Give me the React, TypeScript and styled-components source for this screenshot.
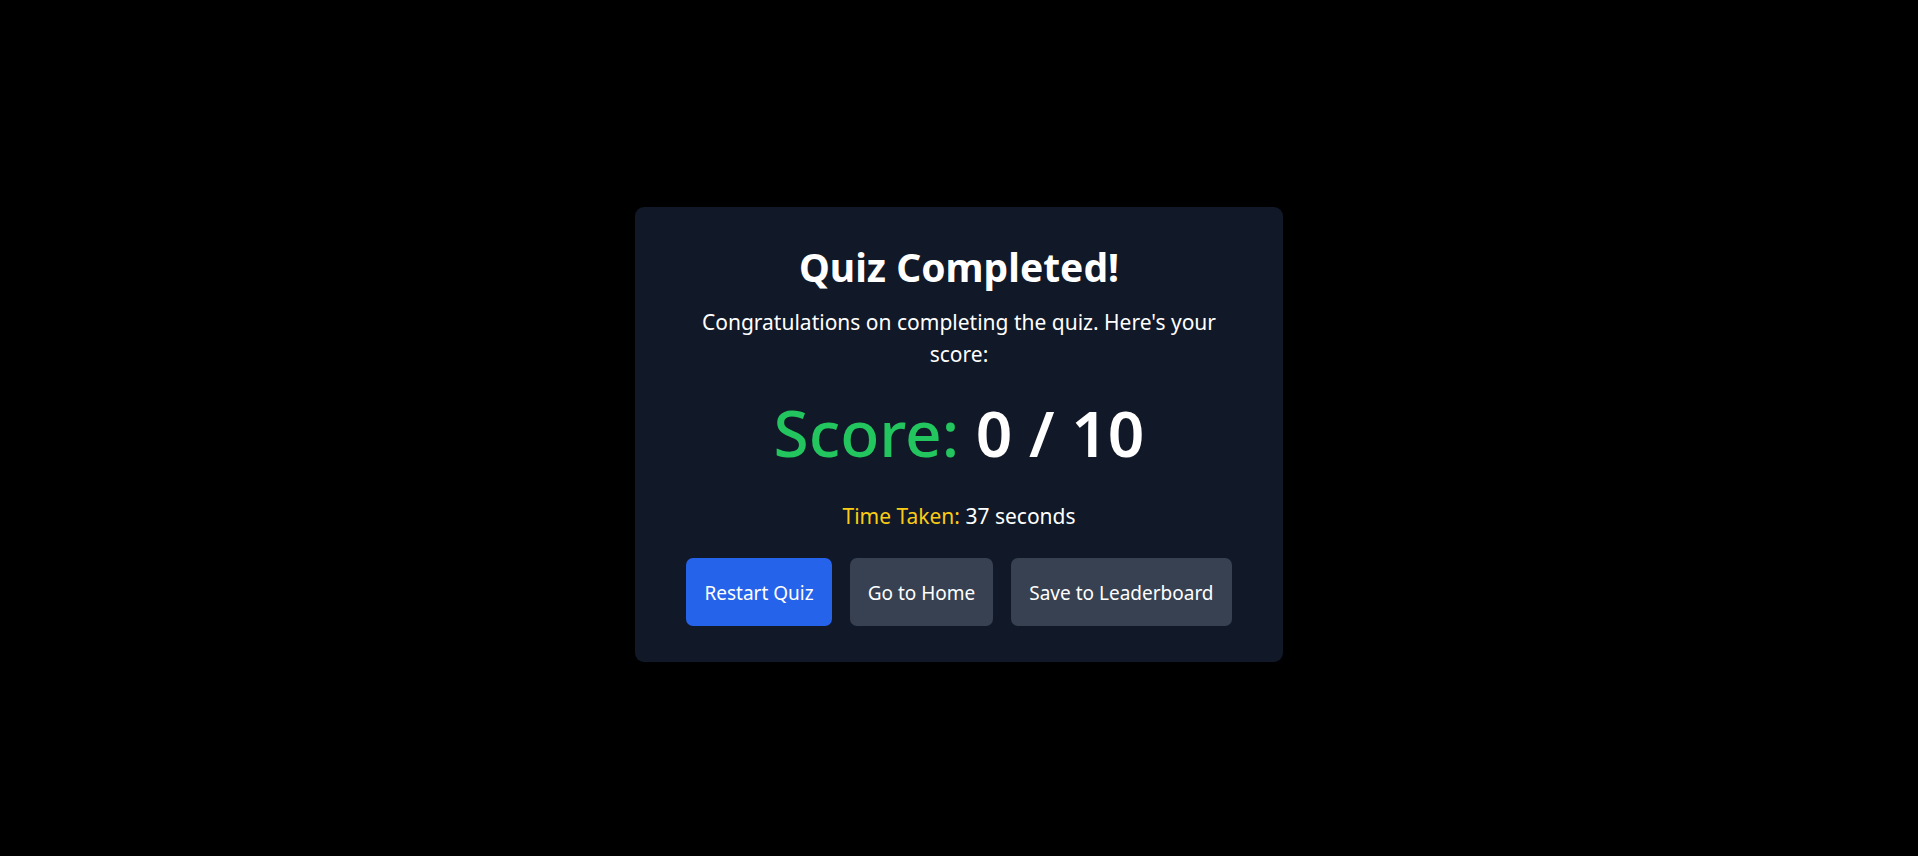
import React from 'react';
import styled, { createGlobalStyle } from 'styled-components';

const GlobalStyle = createGlobalStyle`
  *, *::before, *::after {
    box-sizing: border-box;
  }

  body {
    margin: 0;
    background: #000;
    color: #fff;
    font-family: 'Segoe UI', 'Noto Sans', sans-serif;
  }
`;

const Page = styled.main`
  min-height: 100vh;
  padding-top: 13px;
  display: flex;
  align-items: center;
  justify-content: center;
`;

const Card = styled.section`
  width: 100%;
  max-width: 648px;
  padding: 36px 48px;
  border-radius: 9px;
  background: #111827;
  text-align: center;
`;

const Title = styled.h1`
  margin: 0 0 15px;
  font-size: 39px;
  line-height: 48px;
  font-weight: 700;
`;

const Text = styled.p`
  margin: 0;
  font-size: 21px;
  line-height: 32px;
`;

const Label = styled.span<{ $color: string }>`
  color: ${({ $color }) => $color};
`;

const Score = styled.p`
  margin: 31px 0 35px;
  font-size: 64px;
  line-height: 64px;
  font-weight: 600;

  ${Label} {
    font-weight: 500;
  }
`;

const Actions = styled.div`
  margin-top: 26px;
  display: flex;
  flex-wrap: wrap;
  justify-content: center;
  gap: 18px;
`;

const Button = styled.button<{ $primary?: boolean }>`
  padding: 19px 18px 17px;
  border: 0;
  border-radius: 7px;
  background: ${({ $primary }) => ($primary ? '#2563eb' : '#374151')};
  color: #fff;
  font-family: inherit;
  font-size: 19px;
  line-height: 32px;
  cursor: pointer;

  &:hover {
    background: ${({ $primary }) => ($primary ? '#1d4ed8' : '#4b5563')};
  }
`;

export default function App() {
  const score = 0;
  const total = 10;
  const seconds = 37;

  return (
    <>
      <GlobalStyle />
      <Page>
        <Card>
          <Title>Quiz Completed!</Title>
          <Text>Congratulations on completing the quiz. Here's your score:</Text>
          <Score>
            <Label $color="#22c55e">Score:</Label> {score} / {total}
          </Score>
          <Text>
            <Label $color="#facc15">Time Taken:</Label> {seconds} seconds
          </Text>
          <Actions>
            <Button type="button" $primary>Restart Quiz</Button>
            <Button type="button">Go to Home</Button>
            <Button type="button">Save to Leaderboard</Button>
          </Actions>
        </Card>
      </Page>
    </>
  );
}
